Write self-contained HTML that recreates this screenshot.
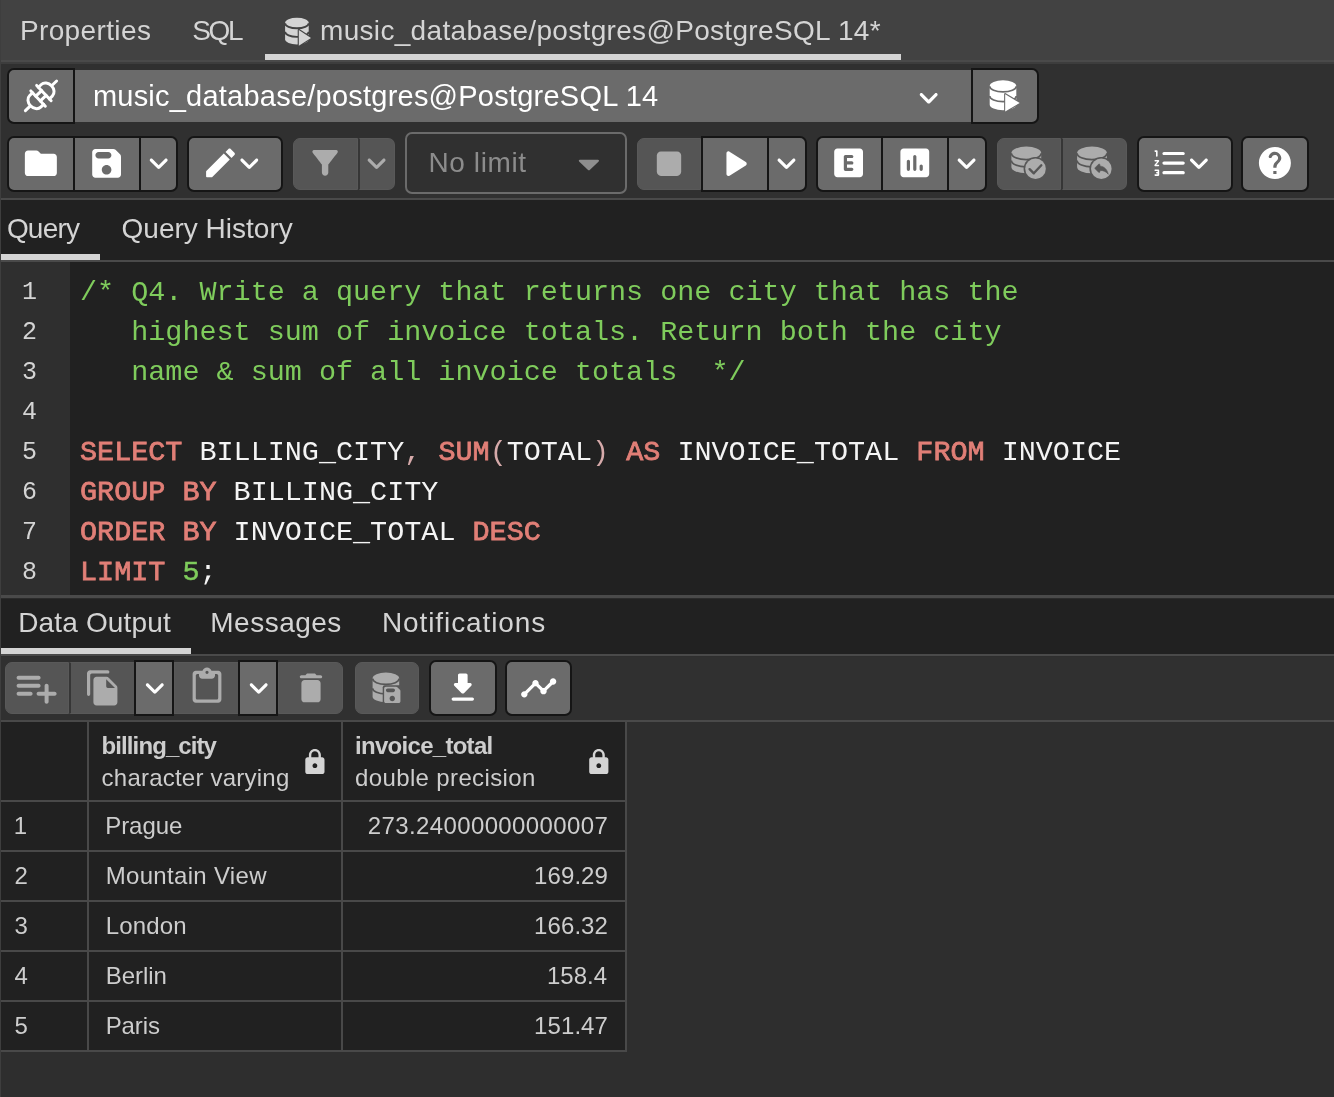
<!DOCTYPE html>
<html lang="en">
<head>
<meta charset="utf-8">
<title>pgAdmin Query Tool</title>
<style>
html,body{margin:0;padding:0;}
body{width:1334px;height:1097px;overflow:hidden;background:#2e2e2e;font-family:"Liberation Sans",sans-serif;color:#d4d4d4;position:relative;}
.abs{position:absolute;}
.t{position:absolute;white-space:nowrap;line-height:1;}
/* top tab bar */
#tabbar{left:0;top:0;width:1334px;height:60px;background:#424242;border-bottom:2px solid #4a4a4a;box-shadow:0 2px 0 #3d3d3d;}
#tabline{left:265px;top:54px;width:636px;height:6px;background:#d4d4d4;}
.tab{font-size:27px;color:#d4d4d4;top:17px;}
/* toolbar */
#toolbar{left:0;top:64px;width:1334px;height:136px;background:#303030;border-bottom:2px solid #4a4a4a;box-sizing:border-box;}
.btn{position:absolute;box-sizing:border-box;background:#6b6b6b;border:2px solid #151515;}
.btn.dis{background:#555555;border:1px solid #595959;}
.btn.dis.dv{border-left:2px solid #363636;}
.btn svg{position:absolute;}
/* query tabs */
#qtabs{left:0;top:200px;width:1334px;height:60px;background:#212121;border-bottom:2px solid #4a4a4a;box-sizing:content-box;}
/* editor */
#editor{left:0;top:262px;width:1334px;height:333px;background:#212121;}
#gutter{left:0;top:0;width:70px;height:333px;background:#2f2f2f;}
.ln{will-change:transform;position:absolute;left:0;width:37px;text-align:right;font-family:"Liberation Mono",monospace;font-size:25px;color:#d4d4d4;line-height:40px;height:40px;}
.cl{will-change:transform;position:absolute;left:80px;font-family:"Liberation Mono",monospace;font-size:28.45px;line-height:40px;height:40px;white-space:pre;color:#f4f4f4;}
.cm{color:#7fcc5c;}
.kw{color:#e17f77;-webkit-text-stroke:0.8px #e17f77;}
.pn{color:#d6aaaa;}
.nm{color:#7fcc5c;-webkit-text-stroke:0.5px #7fcc5c;}
/* splitter + output */
#split{left:0;top:595px;width:1334px;height:2.5px;background:#4a4a4a;border-bottom:3px solid #2b2b2b;}
#otabs{left:0;top:599px;width:1334px;height:55.3px;background:#212121;border-bottom:2px solid #4a4a4a;}
#otool{left:0;top:657px;width:1334px;height:65px;background:#303030;border-bottom:2px solid #4a4a4a;box-sizing:border-box;}
/* grid */
#grid{left:0;top:720px;width:626px;height:331px;background:#212121;}
.gl{position:absolute;background:#494949;}
.cell{font-size:24px;color:#d4d4d4;}
</style>
</head>
<body>
<div id="tabbar" class="abs"></div>
<div id="tabline" class="abs"></div>

<div id="toolbar" class="abs"></div>
<!-- row 2 -->
<div class="abs" id="limit" style="left:404.5px;top:132px;width:222.5px;height:62px;box-sizing:border-box;border:2px solid #6b6b6b;border-radius:7px;background:#303030;"></div>

<!-- query tabs -->
<div id="qtabs" class="abs"></div>
<div class="abs" style="left:0;top:254px;width:100px;height:6px;background:#d4d4d4;"></div>

<!-- editor -->
<div id="editor" class="abs">
<div id="gutter" class="abs"></div>
<div class="ln" style="top:10.5px;">1</div>
<div class="ln" style="top:50.5px;">2</div>
<div class="ln" style="top:90.5px;">3</div>
<div class="ln" style="top:130.5px;">4</div>
<div class="ln" style="top:170.5px;">5</div>
<div class="ln" style="top:210.5px;">6</div>
<div class="ln" style="top:250.5px;">7</div>
<div class="ln" style="top:290.5px;">8</div>
<div class="cl cm" style="top:10.5px;">/* Q4. Write a query that returns one city that has the</div>
<div class="cl cm" style="top:50.5px;">   highest sum of invoice totals. Return both the city</div>
<div class="cl cm" style="top:90.5px;">   name &amp; sum of all invoice totals  */</div>
<div class="cl" style="top:170.5px;"><span class="kw">SELECT</span> BILLING_CITY<span class="pn">,</span> <span class="kw">SUM</span><span class="pn">(</span>TOTAL<span class="pn">)</span> <span class="kw">AS</span> INVOICE_TOTAL <span class="kw">FROM</span> INVOICE</div>
<div class="cl" style="top:210.5px;"><span class="kw">GROUP BY</span> BILLING_CITY</div>
<div class="cl" style="top:250.5px;"><span class="kw">ORDER BY</span> INVOICE_TOTAL <span class="kw">DESC</span></div>
<div class="cl" style="top:290.5px;"><span class="kw">LIMIT</span> <span class="nm">5</span>;</div>
</div>

<div id="split" class="abs"></div>
<div id="otabs" class="abs"></div>
<div class="abs" style="left:0;top:648.3px;width:190.5px;height:6px;background:#d4d4d4;"></div>

<div id="otool" class="abs"></div>

<!-- grid -->
<div id="grid" class="abs"></div>
<div class="gl" style="left:0;top:720px;width:627px;height:2px;"></div>
<div class="gl" style="left:0;top:800px;width:627px;height:2px;"></div>
<div class="gl" style="left:0;top:850px;width:627px;height:2px;"></div>
<div class="gl" style="left:0;top:900px;width:627px;height:2px;"></div>
<div class="gl" style="left:0;top:950px;width:627px;height:2px;"></div>
<div class="gl" style="left:0;top:1000px;width:627px;height:2px;"></div>
<div class="gl" style="left:0;top:1050px;width:627px;height:2px;"></div>
<div class="gl" style="left:87px;top:720px;width:2px;height:332px;"></div>
<div class="gl" style="left:341px;top:720px;width:2px;height:332px;"></div>
<div class="gl" style="left:625px;top:720px;width:2px;height:332px;"></div>
<div class="abs" style="left:0;top:0;width:1px;height:1097px;background:#3e3e3e;"></div>

<div class="btn" id="b-conn" style="left:7px;top:68px;width:67.50px;height:56px;border-radius:7px 0px 0px 7px;"></div>
<div class="abs" id="b-connsel" style="left:74.5px;top:69.5px;width:896.5px;height:52.5px;background:#6b6b6b;"></div>
<div class="btn" id="b-newconn" style="left:970.5px;top:68px;width:68.00px;height:56px;border-radius:0px 7px 7px 0px;"></div>
<div class="btn" id="b-open" style="left:7px;top:136px;width:67.50px;height:56px;border-radius:7px 0px 0px 7px;"></div>
<div class="btn" id="b-save" style="left:72.5px;top:136px;width:68.20px;height:56px;border-radius:0px 0px 0px 0px;"></div>
<div class="btn" id="b-savedd" style="left:138.7px;top:136px;width:39.80px;height:56px;border-radius:0px 7px 7px 0px;"></div>
<div class="btn" id="b-edit" style="left:187px;top:136px;width:95.50px;height:56px;border-radius:7px 7px 7px 7px;"></div>
<div class="btn dis" id="b-filter" style="left:292.5px;top:138px;width:65.10px;height:52px;border-radius:7px 0px 0px 7px;"></div>
<div class="btn dis dv" id="b-filterdd" style="left:357.6px;top:138px;width:37.40px;height:52px;border-radius:0px 7px 7px 0px;"></div>
<div class="btn dis" id="b-stop" style="left:636.7px;top:138px;width:64.30px;height:52px;border-radius:7px 0px 0px 7px;"></div>
<div class="btn" id="b-run" style="left:701px;top:136px;width:67.50px;height:56px;border-radius:0px 0px 0px 0px;"></div>
<div class="btn" id="b-rundd" style="left:766.5px;top:136px;width:40.00px;height:56px;border-radius:0px 7px 7px 0px;"></div>
<div class="btn" id="b-explain" style="left:815.5px;top:136px;width:67.00px;height:56px;border-radius:7px 0px 0px 7px;"></div>
<div class="btn" id="b-analyze" style="left:880.5px;top:136px;width:68.00px;height:56px;border-radius:0px 0px 0px 0px;"></div>
<div class="btn" id="b-exdd" style="left:946.5px;top:136px;width:40.00px;height:56px;border-radius:0px 7px 7px 0px;"></div>
<div class="btn dis" id="b-commit" style="left:996.7px;top:138px;width:64.50px;height:52px;border-radius:7px 0px 0px 7px;"></div>
<div class="btn dis dv" id="b-rollback" style="left:1061.2px;top:138px;width:65.60px;height:52px;border-radius:0px 7px 7px 0px;"></div>
<div class="btn" id="b-macros" style="left:1137px;top:136px;width:95.50px;height:56px;border-radius:7px 7px 7px 7px;"></div>
<div class="btn" id="b-help" style="left:1241.2px;top:136px;width:67.50px;height:56px;border-radius:7px 7px 7px 7px;"></div>
<div class="btn dis" id="o-add" style="left:4.5px;top:662px;width:64.50px;height:52px;border-radius:7px 0px 0px 7px;"></div>
<div class="btn dis dv" id="o-copy" style="left:69px;top:662px;width:66.00px;height:52px;border-radius:0px 0px 0px 0px;"></div>
<div class="btn" id="o-copydd" style="left:134px;top:660px;width:40.00px;height:56px;border-radius:0px 0px 0px 0px;"></div>
<div class="btn dis" id="o-paste" style="left:173.5px;top:662px;width:65.50px;height:52px;border-radius:0px 0px 0px 0px;"></div>
<div class="btn" id="o-pastedd" style="left:238.3px;top:660px;width:40.00px;height:56px;border-radius:0px 0px 0px 0px;"></div>
<div class="btn dis" id="o-del" style="left:277.8px;top:662px;width:64.90px;height:52px;border-radius:0px 7px 7px 0px;"></div>
<div class="btn dis" id="o-savedata" style="left:354.9px;top:662px;width:63.90px;height:52px;border-radius:7px 7px 7px 7px;"></div>
<div class="btn" id="o-dl" style="left:429px;top:660px;width:67.50px;height:56px;border-radius:7px 7px 7px 7px;"></div>
<div class="btn" id="o-graph" style="left:505.3px;top:660px;width:67.20px;height:56px;border-radius:7px 7px 7px 7px;"></div>
<svg class="abs" style="left:0;top:0;" width="1334" height="1097" viewBox="0 0 1334 1097">
<path fill="#d4d4d4" d="M285.10 22.87 A11.80 5.07 0 0 1 308.70 22.87 V39.33 A11.80 5.07 0 0 1 285.10 39.33 Z"/>
<path fill="none" stroke="#424242" stroke-width="1.9" d="M285.10 23.17 A11.80 5.07 0 0 0 308.70 23.17"/>
<path fill="none" stroke="#424242" stroke-width="1.9" d="M285.10 31.76 A11.80 5.07 0 0 0 308.70 31.76"/>
<path fill="#d4d4d4" stroke="#424242" stroke-width="2.2" stroke-linejoin="round" paint-order="stroke" d="M298.80 30.00 L311.00 37.90 L298.80 45.80 Z"/>
<g transform="translate(41 95.8) rotate(-43.5)" fill="none" stroke="#fff" stroke-width="3" stroke-linecap="round" stroke-linejoin="round"><path d="M-21.500 0 H-15"/><path d="M15 0 H21.500"/><path d="M-4 -8 H-8 A6.500 8 0 0 0 -8 8 H-4"/><path d="M4 -8 H8 A6.500 8 0 0 1 8 8 H4"/><path d="M-4 -10.500 V10.500"/><path d="M4 -10.500 V10.500"/><path d="M-4 -3.300 H4"/><path d="M-4 3.300 H4"/></g>
<path transform="translate(909.50 78.68) scale(1.6)" fill="#ffffff" d="M8.12 9.29 12 13.17l3.88-3.88c.39-.39 1.02-.39 1.41 0 .39.39.39 1.02 0 1.41l-4.59 4.59c-.39.39-1.02.39-1.41 0L6.7 10.7c-.39-.39-.39-1.02 0-1.41.39-.38 1.03-.39 1.42 0z"/>
<path fill="#ffffff" d="M989.70 85.92 A13.30 5.72 0 0 1 1016.30 85.92 V104.58 A13.30 5.72 0 0 1 989.70 104.58 Z"/>
<path fill="none" stroke="#6b6b6b" stroke-width="1.7" d="M989.70 86.22 A13.30 5.72 0 0 0 1016.30 86.22"/>
<path fill="none" stroke="#6b6b6b" stroke-width="1.7" d="M989.70 96.00 A13.30 5.72 0 0 0 1016.30 96.00"/>
<path fill="#ffffff" stroke="#6b6b6b" stroke-width="2.2" stroke-linejoin="round" paint-order="stroke" d="M1005.20 94.20 L1019.70 102.90 L1005.20 111.60 Z"/>
<path transform="translate(21.65 144.10) scale(1.6)" fill="#ffffff" d="M10.59 4.59C10.21 4.21 9.7 4 9.17 4H4c-1.1 0-1.99.9-1.99 2L2 18c0 1.1.9 2 2 2h16c1.1 0 2-.9 2-2V8c0-1.1-.9-2-2-2h-8l-1.41-1.41z"/>
<path transform="translate(87.40 144.10) scale(1.6)" fill="#ffffff" d="M17.59 3.59c-.38-.38-.89-.59-1.42-.59H5c-1.11 0-2 .9-2 2v14c0 1.1.9 2 2 2h14c1.1 0 2-.9 2-2V7.83c0-.53-.21-1.04-.59-1.41l-2.82-2.83zM12 19c-1.66 0-3-1.34-3-3s1.34-3 3-3 3 1.34 3 3-1.34 3-3 3zm1-10H7c-1.1 0-2-.9-2-2s.9-2 2-2h6c1.1 0 2 .9 2 2s-.9 2-2 2z"/>
<path transform="translate(139.50 144.10) scale(1.6)" fill="#ffffff" d="M8.12 9.29 12 13.17l3.88-3.88c.39-.39 1.02-.39 1.41 0 .39.39.39 1.02 0 1.41l-4.59 4.59c-.39.39-1.02.39-1.41 0L6.7 10.7c-.39-.39-.39-1.02 0-1.41.39-.38 1.03-.39 1.42 0z"/>
<path transform="translate(201.30 143.70) scale(1.6)" fill="#ffffff" d="M3 17.46v3.04c0 .28.22.5.5.5h3.04c.13 0 .26-.05.35-.15L17.81 9.94l-3.75-3.75L3.15 17.1c-.1.1-.15.22-.15.36zM20.71 7.04c.39-.39.39-1.02 0-1.41l-2.34-2.34c-.39-.39-1.02-.39-1.41 0l-1.83 1.83 3.75 3.75 1.83-1.83z"/>
<path transform="translate(230.10 144.10) scale(1.6)" fill="#ffffff" d="M8.12 9.29 12 13.17l3.88-3.88c.39-.39 1.02-.39 1.41 0 .39.39.39 1.02 0 1.41l-4.59 4.59c-.39.39-1.02.39-1.41 0L6.7 10.7c-.39-.39-.39-1.02 0-1.41.39-.38 1.03-.39 1.42 0z"/>
<path transform="translate(305.90 143.70) scale(1.6)" fill="#acacac" d="M4.25 5.61C6.57 8.59 10 13 10 13v5c0 1.1.9 2 2 2s2-.9 2-2v-5s3.43-4.41 5.75-7.39c.51-.66.04-1.61-.8-1.61H5.04c-.83 0-1.3.95-.79 1.61z"/>
<path transform="translate(357.40 144.10) scale(1.6)" fill="#acacac" d="M8.12 9.29 12 13.17l3.88-3.88c.39-.39 1.02-.39 1.41 0 .39.39.39 1.02 0 1.41l-4.59 4.59c-.39.39-1.02.39-1.41 0L6.7 10.7c-.39-.39-.39-1.02 0-1.41.39-.38 1.03-.39 1.42 0z"/>
<path fill="#8e8e8e" d="M579.8 159.700 H598 a1 1 0 0 1 .7 1.700 L590 169.700 a1.500 1.500 0 0 1 -2.200 0 L579.100 161.400 a1 1 0 0 1 .7 -1.700z"/>
<path transform="translate(644.64 139.34) scale(2.03)" fill="#acacac" d="M8 6h8c1.1 0 2 .9 2 2v8c0 1.1-.9 2-2 2H8c-1.1 0-2-.9-2-2V8c0-1.1.9-2 2-2z"/>
<path transform="translate(710.45 139.70) scale(2.0)" fill="#ffffff" d="M8 6.82v10.36c0 .79.87 1.27 1.54.84l8.14-5.18c.62-.39.62-1.29 0-1.69L9.54 5.98C8.87 5.55 8 6.03 8 6.82z"/>
<path transform="translate(767.30 144.10) scale(1.6)" fill="#ffffff" d="M8.12 9.29 12 13.17l3.88-3.88c.39-.39 1.02-.39 1.41 0 .39.39.39 1.02 0 1.41l-4.59 4.59c-.39.39-1.02.39-1.41 0L6.7 10.7c-.39-.39-.39-1.02 0-1.41.39-.38 1.03-.39 1.42 0z"/>
<path transform="translate(829.40 143.70) scale(1.6)" fill="#ffffff" d="M19 3H5c-1.1 0-2 .9-2 2v14c0 1.1.9 2 2 2h14c1.1 0 2-.9 2-2V5c0-1.1-.9-2-2-2zm-5 6h-3v2h3c.55 0 1 .45 1 1s-.45 1-1 1h-3v2h3c.55 0 1 .45 1 1s-.45 1-1 1h-4c-.55 0-1-.45-1-1V8c0-.55.45-1 1-1h4c.55 0 1 .45 1 1s-.45 1-1 1z"/>
<path transform="translate(895.60 143.70) scale(1.6)" fill="#ffffff" d="M19 3H5c-1.1 0-2 .9-2 2v14c0 1.1.9 2 2 2h14c1.1 0 2-.9 2-2V5c0-1.1-.9-2-2-2zM8 17c-.55 0-1-.45-1-1v-5c0-.55.45-1 1-1s1 .45 1 1v5c0 .55-.45 1-1 1zm4 0c-.55 0-1-.45-1-1V8c0-.55.45-1 1-1s1 .45 1 1v8c0 .55-.45 1-1 1zm4 0c-.55 0-1-.45-1-1v-2c0-.55.45-1 1-1s1 .45 1 1v2c0 .55-.45 1-1 1z"/>
<path transform="translate(947.40 144.10) scale(1.6)" fill="#ffffff" d="M8.12 9.29 12 13.17l3.88-3.88c.39-.39 1.02-.39 1.41 0 .39.39.39 1.02 0 1.41l-4.59 4.59c-.39.39-1.02.39-1.41 0L6.7 10.7c-.39-.39-.39-1.02 0-1.41.39-.38 1.03-.39 1.42 0z"/>
<path transform="translate(1151.20 143.90) scale(1.6)" fill="#ffffff" d="M8 7h12c.55 0 1-.45 1-1s-.45-1-1-1H8c-.55 0-1 .45-1 1s.45 1 1 1zm12 10H8c-.55 0-1 .45-1 1s.45 1 1 1h12c.55 0 1-.45 1-1s-.45-1-1-1zm0-6H8c-.55 0-1 .45-1 1s.45 1 1 1h12c.55 0 1-.45 1-1s-.45-1-1-1zM4.5 16h-2c-.28 0-.5.22-.5.5s.22.5.5.5H4v.5h-.5c-.28 0-.5.22-.5.5s.22.5.5.5H4v.5H2.5c-.28 0-.5.22-.5.5s.22.5.5.5h2c.28 0 .5-.22.5-.5v-3c0-.28-.22-.5-.5-.5zm-2-11H3v2.500c0 .28.22.5.5.5s.5-.22.5-.5v-3c0-.28-.22-.5-.5-.5h-1c-.28 0-.5.22-.5.5s.22.5.5.5zm2 5h-2c-.28 0-.5.22-.5.5s.22.5.5.5h1.300l-1.680 1.960c-.08.09-.12.21-.12.32v.22c0 .28.22.5.5.5h2c.28 0 .5-.22.5-.5s-.22-.5-.5-.5H3.200l1.680-1.960c.08-.09.12-.21.12-.32v-.22c0-.28-.22-.5-.5-.5z"/>
<path transform="translate(1179.70 144.10) scale(1.6)" fill="#ffffff" d="M8.12 9.29 12 13.17l3.88-3.88c.39-.39 1.02-.39 1.41 0 .39.39.39 1.02 0 1.41l-4.59 4.59c-.39.39-1.02.39-1.41 0L6.7 10.7c-.39-.39-.39-1.02 0-1.41.39-.38 1.03-.39 1.42 0z"/>
<path transform="translate(1255.70 143.70) scale(1.6)" fill="#ffffff" d="M12 2C6.48 2 2 6.48 2 12s4.48 10 10 10 10-4.48 10-10S17.52 2 12 2zm1 17h-2v-2h2v2zm2.070-7.750-.9.92c-.5.51-.86.97-1.040 1.690-.08.32-.13.68-.13 1.140h-2v-.5c0-.46.08-.9.22-1.310.2-.58.53-1.100.95-1.520l1.240-1.260c.46-.44.68-1.100.55-1.800-.13-.72-.69-1.330-1.390-1.530-1.110-.31-2.140.32-2.470 1.270-.12.37-.43.65-.82.650h-.3C8.400 9 8 8.440 8.160 7.880c.43-1.470 1.680-2.590 3.230-2.830 1.520-.24 2.970.55 3.870 1.800 1.180 1.630.83 3.380-.19 4.400z"/>
<path fill="#acacac" d="M1011.40 153.01 A14.90 6.41 0 0 1 1041.20 153.01 V166.89 A14.90 6.41 0 0 1 1011.40 166.89 Z"/>
<path fill="none" stroke="#565656" stroke-width="1.7" d="M1011.40 153.31 A14.90 6.41 0 0 0 1041.20 153.31"/>
<path fill="none" stroke="#565656" stroke-width="1.7" d="M1011.40 160.51 A14.90 6.41 0 0 0 1041.20 160.51"/>
<circle cx="1035.5" cy="168.8" r="11.9" fill="#565656"/><circle cx="1035.5" cy="168.8" r="10.3" fill="#acacac"/>
<path fill="none" stroke="#565656" stroke-width="2.4" stroke-linecap="round" stroke-linejoin="round" d="M1029.6 169.2 L1033.8 173.3 L1041.3 165.300"/>
<path fill="#acacac" d="M1077.10 153.01 A14.90 6.41 0 0 1 1106.90 153.01 V166.89 A14.90 6.41 0 0 1 1077.10 166.89 Z"/>
<path fill="none" stroke="#565656" stroke-width="1.7" d="M1077.10 153.31 A14.90 6.41 0 0 0 1106.90 153.31"/>
<path fill="none" stroke="#565656" stroke-width="1.7" d="M1077.10 160.51 A14.90 6.41 0 0 0 1106.90 160.51"/>
<circle cx="1101.3" cy="168.8" r="11.9" fill="#565656"/><circle cx="1101.3" cy="168.8" r="10.3" fill="#acacac"/>
<path transform="translate(1092.300 159.100) scale(0.76)" fill="#565656" stroke="#565656" stroke-width="0.8" stroke-linejoin="round" d="M10 9V7.410c0-.89-1.080-1.340-1.710-.71L3.700 11.290c-.39.39-.39 1.020 0 1.410l4.590 4.590c.63.63 1.710.19 1.710-.7V14.900c5 0 8.500 1.600 11 5.100-1-5-4-10-11-11z"/>
<path transform="translate(12.60 663.75) scale(2.0)" fill="#acacac" d="M13 10H3c-.55 0-1 .45-1 1s.45 1 1 1h10c.55 0 1-.45 1-1s-.45-1-1-1zm0-4H3c-.55 0-1 .45-1 1s.45 1 1 1h10c.55 0 1-.45 1-1s-.45-1-1-1zm5 8v-3c0-.55-.45-1-1-1s-1 .45-1 1v3h-3c-.55 0-1 .45-1 1s.45 1 1 1h3v3c0 .55.45 1 1 1s1-.45 1-1v-3h3c.55 0 1-.45 1-1s-.45-1-1-1h-3zM3 16h6c.55 0 1-.45 1-1s-.45-1-1-1H3c-.55 0-1 .45-1 1s.45 1 1 1z"/>
<path transform="translate(83.80 668.75) scale(1.6)" fill="#acacac" d="M15 1H4c-1.1 0-2 .9-2 2v13c0 .55.45 1 1 1s1-.45 1-1V4c0-.55.45-1 1-1h10c.55 0 1-.45 1-1s-.45-1-1-1zm.59 4.590 4.830 4.830c.37.37.58.88.58 1.410V21c0 1.100-.9 2-2 2H7.990C6.890 23 6 22.100 6 21l.01-14c0-1.100.89-2 1.990-2h6.170c.53 0 1.040.21 1.420.59zM15 12h4.500L14 6.500V11c0 .55.45 1 1 1z"/>
<path transform="translate(135.60 668.85) scale(1.6)" fill="#ffffff" d="M8.12 9.29 12 13.17l3.88-3.88c.39-.39 1.02-.39 1.41 0 .39.39.39 1.02 0 1.41l-4.59 4.59c-.39.39-1.02.39-1.41 0L6.7 10.7c-.39-.39-.39-1.02 0-1.41.39-.38 1.03-.39 1.42 0z"/>
<path transform="translate(187.80 667.55) scale(1.6)" fill="#acacac" d="M19 2h-4.180C14.400.84 13.300 0 12 0S9.600.84 9.180 2H5c-1.100 0-2 .9-2 2v16c0 1.100.9 2 2 2h14c1.100 0 2-.9 2-2V4c0-1.100-.9-2-2-2zm-7 0c.55 0 1 .45 1 1s-.45 1-1 1-1-.45-1-1 .45-1 1-1zm6 18H6c-.55 0-1-.45-1-1V5c0-.55.45-1 1-1h1v1c0 1.100.9 2 2 2h6c1.100 0 2-.9 2-2V4h1c.55 0 1 .45 1 1v14c0 .55-.45 1-1 1z"/>
<path transform="translate(239.50 668.85) scale(1.6)" fill="#ffffff" d="M8.12 9.29 12 13.17l3.88-3.88c.39-.39 1.02-.39 1.41 0 .39.39.39 1.02 0 1.41l-4.59 4.59c-.39.39-1.02.39-1.41 0L6.7 10.7c-.39-.39-.39-1.02 0-1.41.39-.38 1.03-.39 1.42 0z"/>
<path transform="translate(291.80 668.75) scale(1.6)" fill="#acacac" d="M6 19c0 1.100.9 2 2 2h8c1.100 0 2-.9 2-2V9c0-1.100-.9-2-2-2H8c-1.100 0-2 .9-2 2v10zM18 4h-2.500l-.71-.71c-.18-.18-.44-.29-.7-.29H9.910c-.26 0-.52.11-.7.29L8.500 4H6c-.55 0-1 .45-1 1s.45 1 1 1h12c.55 0 1-.45 1-1s-.45-1-1-1z"/>
<path fill="#acacac" d="M372.60 678.32 A13.30 5.72 0 0 1 399.20 678.32 V696.48 A13.30 5.72 0 0 1 372.60 696.48 Z"/>
<path fill="none" stroke="#565656" stroke-width="1.7" d="M372.60 678.62 A13.30 5.72 0 0 0 399.20 678.62"/>
<path fill="none" stroke="#565656" stroke-width="1.7" d="M372.60 688.13 A13.30 5.72 0 0 0 399.20 688.13"/>
<rect x="382.7" y="685.3" width="19.2" height="19.2" rx="2" fill="#565656"/>
<path transform="translate(381.400 684.000) scale(0.906)" fill="#acacac" d="M17.59 3.59c-.38-.38-.89-.59-1.42-.59H5c-1.11 0-2 .9-2 2v14c0 1.1.9 2 2 2h14c1.1 0 2-.9 2-2V7.83c0-.53-.21-1.04-.59-1.41l-2.82-2.83zM12 19c-1.66 0-3-1.34-3-3s1.34-3 3-3 3 1.34 3 3-1.34 3-3 3zm1-10H7c-1.1 0-2-.9-2-2s.9-2 2-2h6c1.1 0 2 .9 2 2s-.9 2-2 2z"/>
<path transform="translate(443.60 668.65) scale(1.6)" fill="#ffffff" d="M16.590 9H15V4c0-.55-.45-1-1-1h-4c-.55 0-1 .45-1 1v5H7.410c-.89 0-1.340 1.080-.71 1.710l4.590 4.590c.39.39 1.020.39 1.410 0l4.590-4.590c.63-.63.19-1.710-.7-1.710zM5 19c0 .55.45 1 1 1h12c.55 0 1-.45 1-1s-.45-1-1-1H6c-.55 0-1 .45-1 1z"/>
<path transform="translate(519.50 668.75) scale(1.6)" fill="#ffffff" d="M23 8c0 1.100-.9 2-2 2-.18 0-.35-.02-.51-.07l-3.560 3.550c.05.16.07.34.07.52 0 1.100-.9 2-2 2s-2-.9-2-2c0-.18.02-.36.07-.52l-2.550-2.550c-.16.05-.34.07-.52.07s-.36-.02-.52-.07l-4.550 4.560c.05.16.07.33.07.51 0 1.100-.9 2-2 2s-2-.9-2-2 .9-2 2-2c.18 0 .35.02.51.07l4.560-4.550C8.020 9.360 8 9.180 8 9c0-1.100.9-2 2-2s2 .9 2 2c0 .18-.02.36-.07.52l2.550 2.550c.16-.05.34-.07.52-.07s.36.02.52.07l3.550-3.560C19.020 8.350 19 8.180 19 8c0-1.100.9-2 2-2s2 .9 2 2z"/>
<path transform="translate(300.50 747.70) scale(1.2)" fill="#d4d4d4" d="M18 8h-1V6c0-2.760-2.240-5-5-5S7 3.240 7 6v2H6c-1.100 0-2 .9-2 2v10c0 1.100.9 2 2 2h12c1.100 0 2-.9 2-2V10c0-1.100-.9-2-2-2zm-6 9c-1.100 0-2-.9-2-2s.9-2 2-2 2 .9 2 2-.9 2-2 2zM9 8V6c0-1.660 1.340-3 3-3s3 1.340 3 3v2H9z"/>
<path transform="translate(584.40 747.70) scale(1.2)" fill="#d4d4d4" d="M18 8h-1V6c0-2.760-2.240-5-5-5S7 3.240 7 6v2H6c-1.100 0-2 .9-2 2v10c0 1.100.9 2 2 2h12c1.100 0 2-.9 2-2V10c0-1.100-.9-2-2-2zm-6 9c-1.100 0-2-.9-2-2s.9-2 2-2 2 .9 2 2-.9 2-2 2zM9 8V6c0-1.660 1.340-3 3-3s3 1.340 3 3v2H9z"/>
</svg>

<div class="abs" style="left:0;top:0;width:1334px;height:1097px;will-change:transform;">
<div class="t" id="tProps" style="left:19.90px;top:17.00px;font-size:28px;letter-spacing:0.378px;color:#d4d4d4;">Properties</div>
<div class="t" id="tSQL" style="left:192.20px;top:17.00px;font-size:28px;letter-spacing:-2.300px;color:#d4d4d4;">SQL</div>
<div class="t" id="tTab3" style="left:320.00px;top:17.00px;font-size:28px;letter-spacing:0.319px;color:#d4d4d4;">music_database/postgres@PostgreSQL 14*</div>
<div class="t" id="tConn" style="left:92.90px;top:82.00px;font-size:29px;letter-spacing:0.228px;color:#fff;">music_database/postgres@PostgreSQL 14</div>
<div class="t" id="tLimit" style="left:428.40px;top:149.00px;font-size:28px;letter-spacing:0.629px;color:#8c8c8c;">No limit</div>
<div class="t" id="tQuery" style="left:6.90px;top:215.00px;font-size:28px;letter-spacing:-0.800px;color:#d4d4d4;">Query</div>
<div class="t" id="tQH" style="left:121.60px;top:215.00px;font-size:28px;letter-spacing:-0.000px;color:#d4d4d4;">Query History</div>
<div class="t" id="tDO" style="left:18.20px;top:609.00px;font-size:28px;letter-spacing:0.160px;color:#d4d4d4;">Data Output</div>
<div class="t" id="tMsg" style="left:210.30px;top:609.00px;font-size:28px;letter-spacing:0.486px;color:#d4d4d4;">Messages</div>
<div class="t" id="tNot" style="left:382.00px;top:609.00px;font-size:28px;letter-spacing:0.892px;color:#d4d4d4;">Notifications</div>
<div class="t" id="hB1" style="left:101.60px;top:734.00px;font-size:24px;letter-spacing:-0.909px;color:#cdcdcd;font-weight:bold;">billing_city</div>
<div class="t" id="hB2" style="left:101.60px;top:766.00px;font-size:24px;letter-spacing:0.225px;color:#cdcdcd;">character varying</div>
<div class="t" id="hI1" style="left:355.10px;top:734.00px;font-size:24px;letter-spacing:-0.717px;color:#cdcdcd;font-weight:bold;">invoice_total</div>
<div class="t" id="hI2" style="left:355.10px;top:766.00px;font-size:24px;letter-spacing:0.360px;color:#cdcdcd;">double precision</div>
<div class="t" id="r1n" style="left:13.80px;top:814.00px;font-size:24px;letter-spacing:0.000px;color:#cdcdcd;">1</div>
<div class="t" id="r2n" style="left:14.50px;top:864.00px;font-size:24px;letter-spacing:0.000px;color:#cdcdcd;">2</div>
<div class="t" id="r3n" style="left:14.50px;top:914.00px;font-size:24px;letter-spacing:0.000px;color:#cdcdcd;">3</div>
<div class="t" id="r4n" style="left:14.50px;top:964.00px;font-size:24px;letter-spacing:0.000px;color:#cdcdcd;">4</div>
<div class="t" id="r5n" style="left:14.50px;top:1014.00px;font-size:24px;letter-spacing:0.000px;color:#cdcdcd;">5</div>
<div class="t" id="r1c" style="left:105.20px;top:814.00px;font-size:24px;letter-spacing:-0.040px;color:#cdcdcd;">Prague</div>
<div class="t" id="r2c" style="left:105.70px;top:864.00px;font-size:24px;letter-spacing:0.317px;color:#cdcdcd;">Mountain View</div>
<div class="t" id="r3c" style="left:105.70px;top:914.00px;font-size:24px;letter-spacing:0.160px;color:#cdcdcd;">London</div>
<div class="t" id="r4c" style="left:105.70px;top:964.00px;font-size:24px;letter-spacing:-0.040px;color:#cdcdcd;">Berlin</div>
<div class="t" id="r5c" style="left:105.70px;top:1014.00px;font-size:24px;letter-spacing:-0.100px;color:#cdcdcd;">Paris</div>
<div class="t" id="r1v" style="left:367.80px;top:814.00px;font-size:24px;letter-spacing:0.376px;color:#cdcdcd;">273.24000000000007</div>
<div class="t" id="r2v" style="left:534.10px;top:864.00px;font-size:24px;letter-spacing:0.080px;color:#cdcdcd;">169.29</div>
<div class="t" id="r3v" style="left:534.10px;top:914.00px;font-size:24px;letter-spacing:0.080px;color:#cdcdcd;">166.32</div>
<div class="t" id="r4v" style="left:547.00px;top:964.00px;font-size:24px;letter-spacing:0.000px;color:#cdcdcd;">158.4</div>
<div class="t" id="r5v" style="left:534.10px;top:1014.00px;font-size:24px;letter-spacing:0.080px;color:#cdcdcd;">151.47</div>
</div>
</body>
</html>
